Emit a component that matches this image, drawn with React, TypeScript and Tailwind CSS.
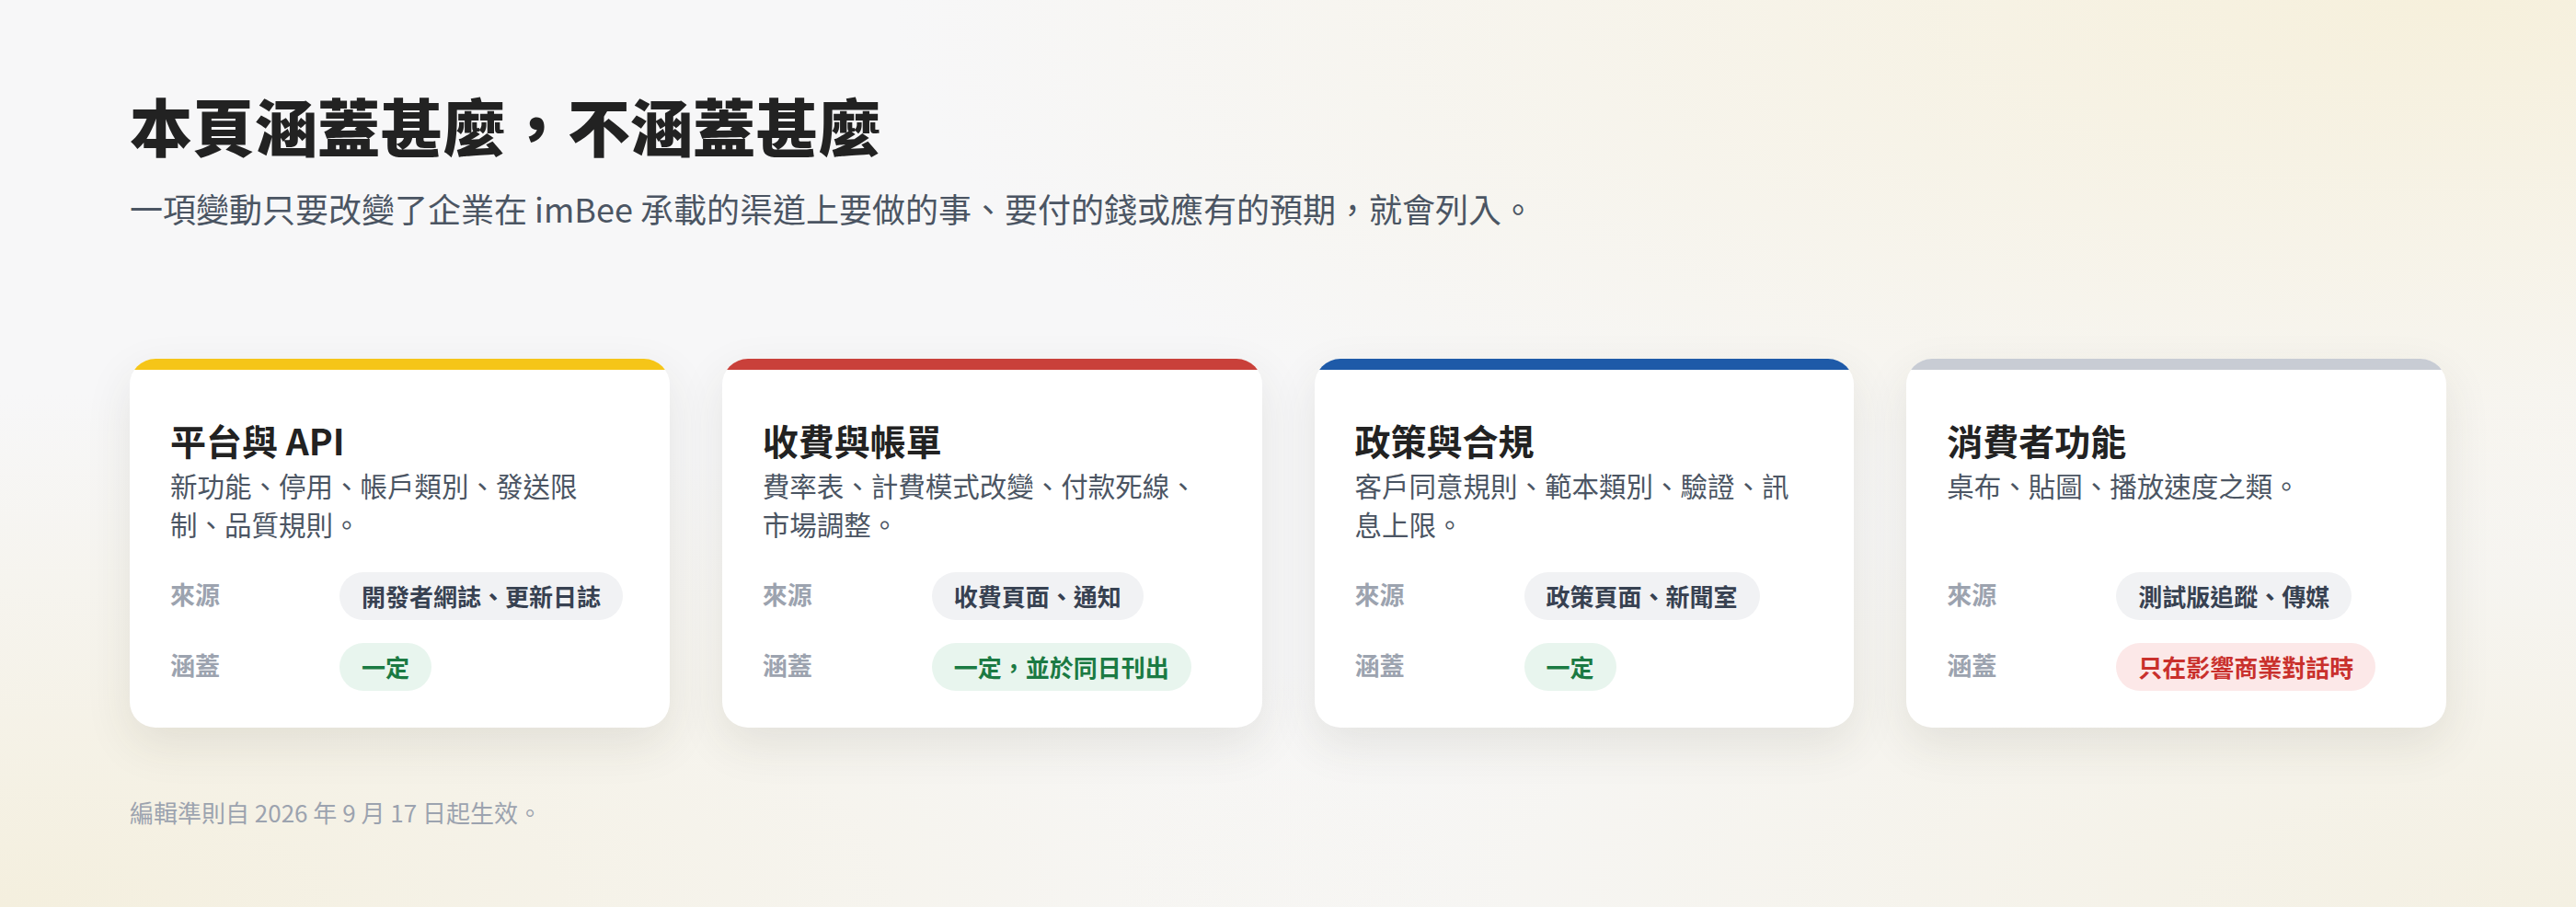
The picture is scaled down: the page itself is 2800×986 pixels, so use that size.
const font = { fontFamily: '"Noto Sans CJK TC", "Noto Sans", sans-serif' };

interface Area {
  title: string;
  desc: string;
  bar: string;
  source: string;
  cover: string;
  tone: 'green' | 'red';
}

const areas: Area[] = [
  { title: '平台與 API', desc: '新功能、停用、帳戶類別、發送限制、品質規則。', bar: 'bg-[#f5c518]', source: '開發者網誌、更新日誌', cover: '一定', tone: 'green' },
  { title: '收費與帳單', desc: '費率表、計費模式改變、付款死線、市場調整。', bar: 'bg-[#c9403a]', source: '收費頁面、通知', cover: '一定，並於同日刊出', tone: 'green' },
  { title: '政策與合規', desc: '客戶同意規則、範本類別、驗證、訊息上限。', bar: 'bg-[#1e5aa8]', source: '政策頁面、新聞室', cover: '一定', tone: 'green' },
  { title: '消費者功能', desc: '桌布、貼圖、播放速度之類。', bar: 'bg-[#c8ccd4]', source: '測試版追蹤、傳媒', cover: '只在影響商業對話時', tone: 'red' },
];

function Card({ a }: { a: Area }) {
  return (
    <div className="flex-1 overflow-hidden rounded-[28px] bg-white shadow-[0_18px_50px_rgba(60,60,40,0.10)]">
      <div className={`h-3 ${a.bar}`} />
      <div className="px-11 pt-[52px] pb-10">
        <h2 className="text-[39px] leading-[48px] font-bold text-[#222]">{a.title}</h2>
        <p className="mt-[4px] min-h-[84px] pr-3 text-[29.5px] leading-[42px] text-[#4b5563]">{a.desc}</p>
        <div className="mt-[32px] flex flex-col gap-[25px]">
          <div className="flex">
            <div className="w-[184px] pt-1 text-[27px] leading-[40px] font-bold text-[#9ca3af]">來源</div>
            <span className="h-[52px] rounded-full bg-[#f1f2f4] px-6 text-[26px] leading-[52px] font-bold text-[#374151]">{a.source}</span>
          </div>
          <div className="flex">
            <div className="w-[184px] pt-1 text-[27px] leading-[40px] font-bold text-[#9ca3af]">涵蓋</div>
            <span
              className={
                a.tone === 'green'
                  ? 'h-[52px] rounded-full bg-[#e8f5ee] px-6 text-[26px] leading-[52px] font-bold text-[#1b7a43]'
                  : 'h-[52px] rounded-full bg-[#fce8e8] px-6 text-[26px] leading-[52px] font-bold text-[#c9302c]'
              }
            >
              {a.cover}
            </span>
          </div>
        </div>
      </div>
    </div>
  );
}

export default function App() {
  return (
    <div
      style={font}
      className="h-[986px] w-[2800px] bg-[radial-gradient(ellipse_at_95%_0%,#f6f0dc_0%,rgba(246,240,220,0)_45%),radial-gradient(ellipse_at_0%_100%,#f4efde_0%,rgba(244,239,222,0)_40%),radial-gradient(ellipse_at_100%_100%,#f4f0e2_0%,rgba(244,240,226,0)_40%)] bg-[#f7f7f8] px-[141px] pt-[90px]"
    >
      <h1 className="text-[68px] leading-[92px] font-black text-[#222]">本頁涵蓋甚麼，不涵蓋甚麼</h1>
      <p className="mt-[20px] text-[36px] leading-[48px] text-[#4b5563]">
        一項變動只要改變了企業在 imBee 承載的渠道上要做的事、要付的錢或應有的預期，就會列入。
      </p>
      <div className="mt-[140px] flex gap-[57px]">
        {areas.map((a) => (
          <Card key={a.title} a={a} />
        ))}
      </div>
      <p className="mt-[74px] text-[26px] leading-[36px] text-[#9ca3af]">編輯準則自 2026 年 9 月 17 日起生效。</p>
    </div>
  );
}
